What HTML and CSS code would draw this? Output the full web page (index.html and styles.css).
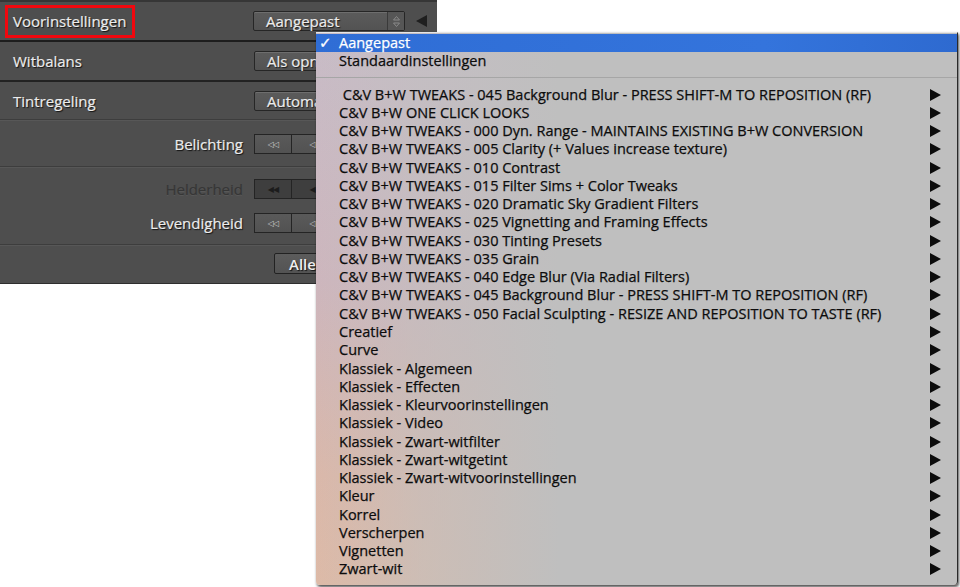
FILE: index.html
```html
<!DOCTYPE html>
<html lang="nl">
<head>
  <meta charset="UTF-8" />
  <title>Voorinstellingen</title>
  <link rel="stylesheet" href="styles.css">
</head>
<body>
  <div class="stage">
    <div class="panel">
      <div class="row row-head">
        <div class="label boxed">Voorinstellingen</div>
        <div class="select preset">
          <span class="select-text">Aangepast</span>
          <span class="stepper">
            <svg width="9" height="13" viewBox="0 0 9 13"><path d="M1.5 5 L4.5 1.5 L7.5 5 Z M1.5 8 L4.5 11.5 L7.5 8 Z" fill="none" stroke="#8a8a8a" stroke-width="1"/></svg>
          </span>
        </div>
        <svg class="collapse" width="12" height="12" viewBox="0 0 12 12"><path d="M11 0 L11 12 L0 6 Z" fill="#1f1f1f"/></svg>
      </div>
      <div class="row row-dark">
        <div class="label">Witbalans</div>
        <div class="select"><span class="select-text">Als opname</span></div>
      </div>
      <div class="row row-soft">
        <div class="label">Tintregeling</div>
        <div class="select"><span class="select-text">Automatisch</span></div>
      </div>
      <div class="row row-slider row-soft">
        <div class="label right">Belichting</div>
        <div class="steps">
          <span class="step">&#9665;&#9665;</span>
          <span class="step">&#9665;</span>
        </div>
      </div>
      <div class="group row-soft">
        <div class="slider-row disabled">
          <div class="label right">Helderheid</div>
          <div class="steps">
            <span class="step">&#9664;&#9664;</span>
            <span class="step">&#9664;</span>
          </div>
        </div>
        <div class="slider-row">
          <div class="label right">Levendigheid</div>
          <div class="steps">
            <span class="step">&#9665;&#9665;</span>
            <span class="step">&#9665;</span>
          </div>
        </div>
      </div>
      <div class="row row-foot">
        <button class="reset">Alles</button>
      </div>
    </div>

    <div class="menu">
      <div class="item checked"><span class="check">&#10003;</span>Aangepast</div>
      <div class="item">Standaardinstellingen</div>
      <div class="divider"></div>
      <div class="item sub">&nbsp;C&amp;V B+W TWEAKS - 045 Background Blur - PRESS SHIFT-M TO REPOSITION (RF)</div>
      <div class="item sub">C&amp;V B+W ONE CLICK LOOKS</div>
      <div class="item sub">C&amp;V B+W TWEAKS - 000 Dyn. Range - MAINTAINS EXISTING B+W CONVERSION</div>
      <div class="item sub">C&amp;V B+W TWEAKS - 005 Clarity (+ Values increase texture)</div>
      <div class="item sub">C&amp;V B+W TWEAKS - 010 Contrast</div>
      <div class="item sub">C&amp;V B+W TWEAKS - 015 Filter Sims + Color Tweaks</div>
      <div class="item sub">C&amp;V B+W TWEAKS - 020 Dramatic Sky Gradient Filters</div>
      <div class="item sub">C&amp;V B+W TWEAKS - 025 Vignetting and Framing Effects</div>
      <div class="item sub">C&amp;V B+W TWEAKS - 030 Tinting Presets</div>
      <div class="item sub">C&amp;V B+W TWEAKS - 035 Grain</div>
      <div class="item sub">C&amp;V B+W TWEAKS - 040 Edge Blur (Via Radial Filters)</div>
      <div class="item sub">C&amp;V B+W TWEAKS - 045 Background Blur - PRESS SHIFT-M TO REPOSITION (RF)</div>
      <div class="item sub">C&amp;V B+W TWEAKS - 050 Facial Sculpting - RESIZE AND REPOSITION TO TASTE (RF)</div>
      <div class="item sub">Creatief</div>
      <div class="item sub">Curve</div>
      <div class="item sub">Klassiek - Algemeen</div>
      <div class="item sub">Klassiek - Effecten</div>
      <div class="item sub">Klassiek - Kleurvoorinstellingen</div>
      <div class="item sub">Klassiek - Video</div>
      <div class="item sub">Klassiek - Zwart-witfilter</div>
      <div class="item sub">Klassiek - Zwart-witgetint</div>
      <div class="item sub">Klassiek - Zwart-witvoorinstellingen</div>
      <div class="item sub">Kleur</div>
      <div class="item sub">Korrel</div>
      <div class="item sub">Verscherpen</div>
      <div class="item sub">Vignetten</div>
      <div class="item sub">Zwart-wit</div>
    </div>
  </div>
</body>
</html>
```

FILE: styles.css
```css
body {
  margin: 0;
  background: #fff;
  font-family: 'Open Sans', 'Noto Sans', sans-serif;
}

.stage {
  position: relative;
  width: 960px;
  height: 587px;
  overflow: hidden;
}

/* dark develop panel */
.panel {
  width: 437px;
  height: 284px;
  box-sizing: border-box;
  background: #4e4e4e;
  border-top: 2px solid #363636;
  border-bottom: 1px solid #2e2e2e;
}

.row {
  display: flex;
  align-items: center;
  height: 38px;
  box-sizing: border-box;
}

.row-head {
  border-bottom: 2px solid #1d1d1d;
  height: 40px;
  padding-left: 5px;
}

.row-dark {
  border-bottom: 2px solid #222;
  height: 40px;
}

.row-soft {
  border-bottom: 1px solid #3d3d3d;
  box-shadow: 0 1px 0 #575757;
}

.row-slider {
  height: 47px;
  padding-top: 2px;
}

.label {
  flex-shrink: 0;
  width: 241px;
  padding-left: 13px;
  box-sizing: content-box;
  font-size: 15px;
  color: #ececec;
  text-shadow: 1px 1px 1px #111;
  -webkit-text-stroke: 0.2px #ececec;
}

.label.boxed {
  width: 119px;
  height: 27px;
  line-height: 27px;
  padding-left: 5px;
  margin-right: 118px;
  border: 3.5px solid #f2080f;
}

.label.right {
  width: 243px;
  padding-left: 0;
  padding-right: 11px;
  text-align: right;
}

.select {
  display: flex;
  flex-shrink: 0;
  align-items: center;
  width: 190px;
  height: 20px;
  box-sizing: border-box;
  border: 1px solid #262626;
  border-radius: 2px;
  background: linear-gradient(#5b5b5b, #535353);
  box-shadow: inset 0 1px 0 rgba(255, 255, 255, 0.12);
}

.select.preset {
  width: 152px;
}

.select-text {
  flex: 1;
  padding-left: 12px;
  font-size: 15px;
  color: #ececec;
  text-shadow: 1px 1px 1px #1a1a1a;
  -webkit-text-stroke: 0.2px #ececec;
  white-space: nowrap;
  overflow: hidden;
}

.stepper {
  display: flex;
  align-items: center;
  justify-content: center;
  width: 16px;
  height: 18px;
  border-left: 1px solid #3a3a3a;
  background: #565656;
}

.collapse {
  margin-left: 11px;
}

.steps {
  display: flex;
  flex-shrink: 0;
  height: 20px;
}

.step {
  width: 36px;
  display: flex;
  align-items: center;
  justify-content: center;
  border: 1px solid #242424;
  background: linear-gradient(#5a5a5a, #525252);
  font-family: 'DejaVu Sans', sans-serif;
  font-size: 8px;
  color: #c4c4c4;
  letter-spacing: -1px;
}

.step + .step {
  border-left: none;
  width: 40px;
}

.group {
  height: 78px;
  padding-top: 5px;
  box-sizing: border-box;
}

.slider-row {
  display: flex;
  align-items: center;
  height: 34px;
}

.disabled .label {
  color: #363636;
  -webkit-text-stroke: 0.2px #363636;
  text-shadow: 0 1px 0 #585858;
}

.disabled .step {
  background: #3e3e3e;
  color: #1c1c1c;
}

.row-foot {
  height: 37px;
  padding-left: 274px;
}

.reset {
  flex-shrink: 0;
  height: 21px;
  width: 120px;
  padding: 0 0 0 14px;
  text-align: left;
  border: 1px solid #222;
  border-radius: 2px;
  background: linear-gradient(#5c5c5c, #535353);
  font-family: inherit;
  font-size: 15px;
  font-weight: 600;
  color: #eee;
  text-shadow: 1px 1px 1px #111;
}

/* preset popup menu */
.menu {
  position: absolute;
  left: 316px;
  top: 32px;
  width: 642px;
  height: 553px;
  box-sizing: border-box;
  padding-top: 1px;
  border-top: 1px solid #e6e6e6;
  border-right: 1px solid #2a2a2a;
  border-radius: 0 0 4px 4px;
  background:
    linear-gradient(to right, rgba(192, 192, 192, 0) 0%, rgba(192, 192, 192, 0.55) 16%, #bfbfbf 38%),
    linear-gradient(to bottom, #c8bcc7 0%, #cdb6bd 45%, #dab8aa 80%, #ddbaa7 100%);
  box-shadow: 1px 2px 3px rgba(0, 0, 0, 0.7);
  font-size: 14.5px;
  color: #0c0c0c;
  -webkit-text-stroke: 0.25px #0c0c0c;
}

.item {
  position: relative;
  height: 18.27px;
  line-height: 18.27px;
  padding-left: 23px;
  white-space: nowrap;
}

.checked {
  background: linear-gradient(to right, #2f6dd5, #3474dc 70%, #2e6ad0);
  color: #fff;
  -webkit-text-stroke: 0.25px #fff;
}

.check {
  position: absolute;
  left: 3px;
  top: 0;
  font-family: 'DejaVu Sans', sans-serif;
  font-size: 15px;
  font-weight: bold;
}

.divider {
  height: 15px;
  background: linear-gradient(#a6a6a6, #a6a6a6) 0 6px / 100% 1px no-repeat;
}

.sub::after {
  content: "";
  position: absolute;
  right: 16px;
  top: 3px;
  border-style: solid;
  border-width: 6px 0 6px 11px;
  border-color: transparent transparent transparent #0c0c0c;
}
```
